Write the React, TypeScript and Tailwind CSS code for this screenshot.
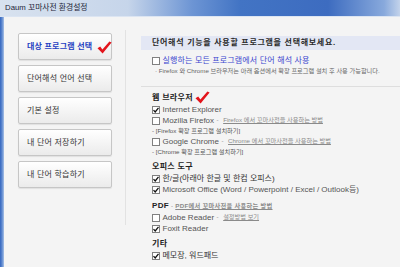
import React from "react";

const Box = ({ checked }: { checked?: boolean }) => (
  <span className="w-[8px] h-[8px] border border-[#808080] bg-white flex items-center justify-center shrink-0">
    {checked && (
      <svg width="6" height="6" viewBox="0 0 6 6">
        <path d="M0.5 3.1 L2.2 4.9 L5.5 0.8" fill="none" stroke="#111" strokeWidth="1.3" />
      </svg>
    )}
  </span>
);

const RedCheck = ({ className = "" }: { className?: string }) => (
  <svg width="15" height="13" viewBox="0 0 15 13" className={className}>
    <path d="M0.5 7.2 L3.2 5.6 L5.4 8.6 L12.4 0.4 L14.6 1.6 L5.6 12.6 Z" fill="#e3141b" />
  </svg>
);

const Row = ({ checked, children }: { checked?: boolean; children: React.ReactNode }) => (
  <div className="h-[11px] flex items-center gap-[2.5px] text-[8px] leading-none whitespace-nowrap">
    <Box checked={checked} />
    {children}
  </div>
);

const Link = ({ children }: { children: React.ReactNode }) => (
  <span className="text-[6.2px] text-[#8a8a8a] underline ml-[2px]">{children}</span>
);

const Sub = ({ children }: { children: React.ReactNode }) => (
  <div className="h-[10px] flex items-center text-[6.2px] text-[#555] leading-none whitespace-nowrap">{children}</div>
);

const Heading = ({ children, className = "" }: { children: React.ReactNode; className?: string }) => (
  <div className={`h-[12px] flex items-center text-[8px] font-bold text-[#222] leading-none whitespace-nowrap tracking-[0.3px] ${className}`}>
    {children}
  </div>
);

const Btn = ({ children, active }: { children: React.ReactNode; active?: boolean }) => (
  <div
    className={`relative w-[94px] h-[27px] border border-[#c6c6c6] rounded-[2px] bg-gradient-to-b from-white to-[#ebebeb] shadow-[0_1px_1px_rgba(0,0,0,0.08)] flex items-center pl-[8px] text-[8px] leading-none whitespace-nowrap tracking-[0.2px] ${
      active ? "text-[#1e3fc2] font-bold" : "text-[#333]"
    }`}
  >
    {children}
    {active && <RedCheck className="absolute right-[-1px] top-[7px]" />}
  </div>
);

export default function App() {
  return (
    <div className="w-[400px] h-[267px] overflow-hidden bg-[#f4f4f4] flex flex-col font-['Liberation_Sans','Noto_Sans_CJK_KR',sans-serif]">
      <div className="h-[17px] shrink-0 flex items-center pl-[5px] text-[7.8px] text-[#1d2538] bg-[linear-gradient(to_right,#d8e2ef_0%,#c6d5ea_32%,#6d95d4_48%,#4274c4_60%,#3d6cc0_82%,#88a9dc_96%,#c3d3eb_100%)] border-b border-[#dce5f2]">
        Daum 꼬마사전 환경설정
      </div>
      <div className="flex flex-1">
        <div className="w-[4px] shrink-0 bg-[linear-gradient(to_right,#3466bf,#5d88cf,#a9c2e6)]" />
        <div className="w-[121px] shrink-0 pt-[16px] pl-[14px] flex flex-col gap-[5px]">
          <Btn active>대상 프로그램 선택</Btn>
          <Btn>단어해석 언어 선택</Btn>
          <Btn>기본 설정</Btn>
          <Btn>내 단어 저장하기</Btn>
          <Btn>내 단어 학습하기</Btn>
        </div>
        <div className="w-px shrink-0 bg-[#e2e2e2] mt-[13px] h-[195px]" />
        <div className="flex-1 pl-[15px] pt-[19px] flex flex-col">
          <div className="h-[14px] bg-[#e3e7f4] flex items-center pl-[11px] text-[8px] font-bold text-[#2a2a2a] leading-none whitespace-nowrap tracking-[0.7px]">
            단어해석 기능을 사용할 프로그램을 선택해보세요.
          </div>
          <div className="pl-[11px] mt-[5px]">
            <Row>
              <span className="text-[#3b46cf] tracking-[0.15px]">실행하는 모든 프로그램에서 단어 해석 사용</span>
            </Row>
            <div className="h-[10px] flex items-center pl-[3px] text-[6.2px] text-[#666] leading-none whitespace-nowrap">
              · Firefox 와 Chrome 브라우저는 아래 옵션에서 확장 프로그램 설치 후 사용 가능합니다.
            </div>
          </div>
          <div className="h-px bg-[#dedede] mt-[10px]" />
          <div className="pl-[11px] mt-[5px] flex flex-col">
            <Heading>
              웹 브라우저
              <RedCheck className="ml-[2px] -mt-[1px]" />
            </Heading>
            <Row checked>
              <span className="text-[#555]">Internet Explorer</span>
            </Row>
            <Row>
              <span className="text-[#555]">Mozilla Firefox</span>
              <span className="text-[6.2px] text-[#888]"> -</span>
              <Link>Firefox 에서 꼬마사전을 사용하는 방법</Link>
            </Row>
            <Sub>- [Firefox 확장 프로그램 설치하기]</Sub>
            <Row>
              <span className="text-[#555]">Google Chrome</span>
              <span className="text-[6.2px] text-[#888]"> -</span>
              <Link>Chrome 에서 꼬마사전을 사용하는 방법</Link>
            </Row>
            <Sub>- [Chrome 확장 프로그램 설치하기]</Sub>
            <Heading className="mt-[4px]">오피스 도구</Heading>
            <Row checked>
              <span className="text-[#333]">한/글(아래아 한글 및 한컴 오피스)</span>
            </Row>
            <Row checked>
              <span className="text-[#555]">Microsoft Office (Word / Powerpoint / Excel / Outlook등)</span>
            </Row>
            <Heading className="mt-[5px]">
              PDF
              <span className="text-[6.2px] font-normal text-[#888] ml-[2px]">-</span>
              <Link>PDF에서 꼬마사전을 사용하는 방법</Link>
            </Heading>
            <Row>
              <span className="text-[#555]">Adobe Reader</span>
              <span className="text-[6.2px] text-[#888]"> -</span>
              <Link>설정방법 보기</Link>
            </Row>
            <Row checked>
              <span className="text-[#555]">Foxit Reader</span>
            </Row>
            <Heading className="mt-[4px]">기타</Heading>
            <Row checked>
              <span className="text-[#333]">메모장, 워드패드</span>
            </Row>
          </div>
        </div>
      </div>
    </div>
  );
}
